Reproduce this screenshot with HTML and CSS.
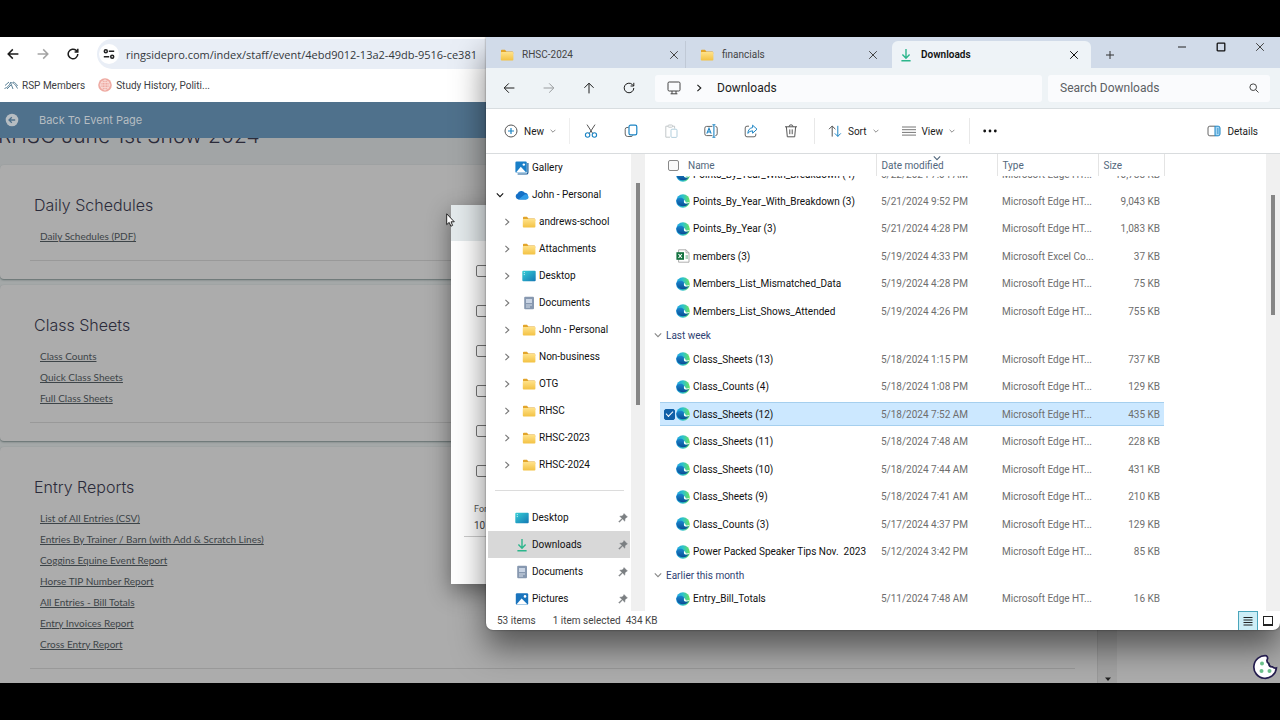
FILE: index.html
```html
<!DOCTYPE html>
<html lang="en">
<head>
    <meta charset="utf-8">
    <meta name="viewport" content="width=device-width, initial-scale=1">
    <title>Reports</title>
    <link rel="stylesheet" href="styles.css">
</head>
<body>
    <!-- ICONS -->
    <svg class="sprite" aria-hidden="true">
        <defs>
            <linearGradient id="gFolder" x1="0" y1="0" x2="0" y2="1"><stop offset="0" stop-color="#ffe28a"/><stop offset="1" stop-color="#f3c244"/></linearGradient>
            <linearGradient id="gDesk" x1="0" y1="0" x2="1" y2="1"><stop offset="0" stop-color="#35cfd6"/><stop offset="1" stop-color="#1478b4"/></linearGradient>
            <linearGradient id="gEdge" x1="0" y1="0" x2="1" y2="0"><stop offset="0" stop-color="#1b9de2"/><stop offset="0.5" stop-color="#2fc3c9"/><stop offset="1" stop-color="#6be35a"/></linearGradient>
            <linearGradient id="gEdge2" x1="0" y1="0" x2="0" y2="1"><stop offset="0" stop-color="#1a86cf"/><stop offset="1" stop-color="#0b4d93"/></linearGradient>
            <symbol id="folder" viewBox="0 0 14 12"><path d="M1 1.5Q1 .8 1.8.8H5l1.4 1.6H12.4q.8 0 .8.8V5H1z" fill="#e2a52b"/><rect x=".8" y="3" width="12.6" height="8.4" rx=".9" fill="url(#gFolder)"/></symbol>
            <symbol id="desktop" viewBox="0 0 14 12"><rect x=".3" y=".8" width="13.4" height="10.4" rx="1" fill="url(#gDesk)"/><path d="M1.8 2.6h1M1.8 4.6h1" stroke="#fff" stroke-width=".8"/></symbol>
            <symbol id="document" viewBox="0 0 14 14"><rect x="2.2" y=".8" width="9.8" height="12.4" rx="1" fill="#8798b0"/><rect x="4" y="3" width="6" height="4" fill="#c9d4e4"/><path d="M4 9h6M4 11h4" stroke="#dfe6f0" stroke-width=".9"/></symbol>
            <symbol id="picture" viewBox="0 0 14 14"><rect x=".8" y="1.2" width="12.4" height="11.6" rx="1.2" fill="#1a74bd"/><path d="M1.4 12.4 6.6 6.4l6 6z" fill="#fff"/><circle cx="10" cy="4.4" r="1.3" fill="#fff"/></symbol>
            <symbol id="gallery" viewBox="0 0 14 14"><path d="M12.9 2v9.4q0 1.6-1.6 1.6H2.6" fill="none" stroke="#155a96" stroke-width="1.2"/><rect x=".4" y=".6" width="11.4" height="11.2" rx="1.2" fill="#1a7fc8"/><path d="M1 11.4 5.8 5.8l5.4 5.6z" fill="#fff"/><circle cx="8.8" cy="3.6" r="1.2" fill="#fff"/></symbol>
            <symbol id="cloud" viewBox="0 0 14 10"><path d="M3.4 9.4A3 3 0 0 1 2.6 3.6 4 4 0 0 1 9.8 2.8a3.4 3.4 0 0 1 1 6.6z" fill="#1470c6"/><path d="M3.4 9.4 9.6 4.4a3.2 3.2 0 0 1 4 2.6q0 2.4-2.6 2.4z" fill="#2f9be8"/></symbol>
            <symbol id="download" viewBox="0 0 14 14"><path d="M7 1v9M3.4 6.6 7 10.2l3.6-3.6M2.4 12.8h9.2" fill="none" stroke="#2cb68c" stroke-width="1.4"/></symbol>
            <symbol id="edge" viewBox="0 0 14 14"><circle cx="7" cy="7" r="6.8" fill="url(#gEdge)"/><path d="M.3 6.4C1.2 3.8 4.4 3.2 6.6 4.2 8.2 5 8.4 6 8 7c-.8 1.6.6 2.6 2.4 2.6 1 0 1.8-.2 2.6-.8A6.8 6.8 0 0 1 .3 6.4z" fill="url(#gEdge2)"/><path d="M7.400 5.800q1.200.6.500 1.900-.3 1.700 1.900 1.900 1.600.1 3.200-.8l.2-.8Q11.400 8.800 9.800 8.300 9.200 6.200 7.400 5.800z" fill="#fff"/></symbol>
            <symbol id="excel" viewBox="0 0 14 14"><path d="M2.600.8h7.400l3 3v9.400H2.600z" fill="#fff" stroke="#9a9a9a" stroke-width=".8"/><path d="M10 .8v3h3" fill="none" stroke="#9a9a9a" stroke-width=".8"/><path d="M9.500 7h2.500M9.500 9h2.500" stroke="#58a77c"/><rect x=".4" y="3.200" width="7.600" height="7.600" fill="#12723f"/><path d="m2.500 5 3.400 4M5.900 5 2.500 9" stroke="#fff" stroke-width="1.100"/></symbol>
            <symbol id="pin" viewBox="0 0 10 10"><path d="m6 .6 3.400 3.400-1 .4L7 5.800 6.800 8.200 4.600 6 1.400 9.200 .8 8.600 4 5.400 1.800 3.200 4.200 3 5.600 1.600z" fill="#7b7f82" stroke="#7b7f82" stroke-width=".5"/></symbol>
            <symbol id="right" viewBox="0 0 8 8"><path d="m2.400.8 3.400 3.200-3.400 3.200" fill="none" stroke="currentColor" stroke-width="1.100"/></symbol>
            <symbol id="down" viewBox="0 0 8 8"><path d="m.8 2.400 3.200 3.200 3.200-3.200" fill="none" stroke="currentColor" stroke-width="1.100"/></symbol>
            <symbol id="close" viewBox="0 0 10 10"><path d="m1.200 1.200 7.600 7.600M8.800 1.200 1.200 8.800" stroke="currentColor"/></symbol>
            <symbol id="arrowLeft" viewBox="0 0 12 12"><path d="M11.400 6H1.200M5.800 1.400 1.200 6l4.600 4.600" fill="none" stroke="currentColor" stroke-width="var(--w, 1)"/></symbol>
            <symbol id="arrowRight" viewBox="0 0 12 12"><path d="M.6 6h10.200M6.200 1.400 10.800 6l-4.600 4.600" fill="none" stroke="currentColor" stroke-width="var(--w, 1)"/></symbol>
            <symbol id="arrowUp" viewBox="0 0 12 12"><path d="M6 11.400V1.200M1.400 5.800 6 1.200l4.600 4.600" fill="none" stroke="currentColor"/></symbol>
            <symbol id="reload" viewBox="0 0 12 12"><path d="M10.800 6a4.800 4.800 0 1 1-1.600-3.600L10.600 3.800M10.800.8v3.200H7.600" fill="none" stroke="currentColor" stroke-width="var(--w, 1)"/></symbol>
        </defs>
    </svg>

    <div class="stage">
        <!-- BROWSER -->
        <div class="browser">
            <div class="address-row">
                <button class="nav-btn" aria-label="Back"><svg class="i12"><use href="#arrowLeft"/></svg></button>
                <button class="nav-btn muted" aria-label="Forward"><svg class="i12"><use href="#arrowRight"/></svg></button>
                <button class="nav-btn" aria-label="Reload"><svg class="i12"><use href="#reload"/></svg></button>
                <div class="url-box">
                    <span class="site-info">
                        <svg class="i12" viewBox="0 0 12 12"><g fill="none" stroke="#222" stroke-width="1.500"><circle cx="2.800" cy="3.200" r="1.500"/><path d="M5.800 3.200h5.400M.8 8.800h5.400"/><circle cx="9.200" cy="8.800" r="1.500"/></g></svg>
                    </span>
                    <input class="url-input" aria-label="Address" value="ringsidepro.com/index/staff/event/4ebd9012-13a2-49db-9516-ce381">
                </div>
            </div>
            <div class="bookmarks">
                <a href="#" class="bookmark">
                    <svg class="i14" viewBox="0 0 14 14"><g fill="none" stroke="#5d8298"><path d="M.5 10.500C4 9.500 5.500 7 6.500 4.500c3 0 5 2 7 6M1 7.500l4-3.500M6.500 4.500 9 11M9 4c2 .5 3.500 2 4.500 4M3 11l4-4"/></g></svg>
                    RSP Members</a>
                <a href="#" class="bookmark">
                    <svg class="i14" viewBox="0 0 14 14"><circle cx="7" cy="7" r="6.800" fill="#eeaaa2"/><g fill="none" stroke="#f9dcd8" stroke-width=".8"><circle cx="7" cy="7" r="4.600"/><path d="M7 1v12M4 3v8M10 3v8M1.500 7h11M3 4.500h8M3 9.500h8"/></g></svg>
                    Study History, Politi...</a>
            </div>
            <div class="page">
                <div class="page-main">
                    <div class="page-bar">
                        <a href="#" class="back-link">
                            <svg class="i14" viewBox="0 0 14 14"><circle cx="7" cy="7" r="6.300" fill="#b6bdc2"/><path d="M10.200 7H4.200M6.800 4.200 4 7l2.800 2.800" fill="none" stroke="#4d708b" stroke-width="1.300"/></svg>
                            Back To Event Page</a>
                    </div>
                    <div class="hero"><h1 class="hero-title">RHSC June 1st Show 2024</h1></div>
                    <section class="card">
                        <h2 class="card-title">Daily Schedules</h2>
                        <ul class="links">
                            <li><a href="#">Daily Schedules (PDF)</a></li>
                        </ul>
                    </section>
                    <section class="card">
                        <h2 class="card-title">Class Sheets</h2>
                        <ul class="links">
                            <li><a href="#">Class Counts</a></li>
                            <li><a href="#">Quick Class Sheets</a></li>
                            <li><a href="#">Full Class Sheets</a></li>
                        </ul>
                    </section>
                    <section class="card">
                        <h2 class="card-title">Entry Reports</h2>
                        <ul class="links">
                            <li><a href="#">List of All Entries (CSV)</a></li>
                            <li><a href="#">Entries By Trainer / Barn (with Add &amp; Scratch Lines)</a></li>
                            <li><a href="#">Coggins Equine Event Report</a></li>
                            <li><a href="#">Horse TIP Number Report</a></li>
                            <li><a href="#">All Entries - Bill Totals</a></li>
                            <li><a href="#">Entry Invoices Report</a></li>
                            <li><a href="#">Cross Entry Report</a></li>
                        </ul>
                    </section>
                </div>
                <div class="page-scroll"><svg class="i8" viewBox="0 0 8 8"><path d="M1 2.500h6L4 6z" fill="#222"/></svg></div>
                <div class="page-side"></div>
            </div>
        </div>

        <!-- DIALOG BEHIND THE EXPLORER -->
        <form class="dialog">
            <div class="dialog-head"></div>
            <div class="dialog-body">
                <input type="checkbox" class="option" aria-label="Option 1">
                <input type="checkbox" class="option" aria-label="Option 2">
                <input type="checkbox" class="option" aria-label="Option 3">
                <input type="checkbox" class="option" aria-label="Option 4">
                <input type="checkbox" class="option" aria-label="Option 5">
                <input type="checkbox" class="option" aria-label="Option 6">
                <label class="size-label" for="size">For</label>
                <input id="size" class="size-input" value="10">
            </div>
        </form>

        <!-- FILE EXPLORER -->
        <div class="explorer">
            <div class="tabs">
                <div class="tab">
                    <svg class="i14"><use href="#folder"/></svg><span class="tab-name">RHSC-2024</span>
                    <button class="tab-close" aria-label="Close tab"><svg class="i10"><use href="#close"/></svg></button>
                </div>
                <div class="tab tab-line">
                    <svg class="i14"><use href="#folder"/></svg><span class="tab-name">financials</span>
                    <button class="tab-close" aria-label="Close tab"><svg class="i10"><use href="#close"/></svg></button>
                </div>
                <div class="tab active">
                    <svg class="i14"><use href="#download"/></svg><span class="tab-name">Downloads</span>
                    <button class="tab-close" aria-label="Close tab"><svg class="i10"><use href="#close"/></svg></button>
                </div>
                <button class="new-tab" aria-label="New tab"><svg class="i10" viewBox="0 0 10 10"><path d="M5 1v8M1 5h8" stroke="#333"/></svg></button>
                <div class="win-buttons">
                    <button aria-label="Minimize"><svg class="i10" viewBox="0 0 10 10"><path d="M1 5h8" stroke="#222"/></svg></button>
                    <button aria-label="Maximize"><svg class="i10" viewBox="0 0 10 10"><rect x="1.200" y="1.200" width="7.600" height="7.600" rx=".6" fill="none" stroke="#111" stroke-width="1.300"/></svg></button>
                    <button aria-label="Close"><svg class="i10"><use href="#close"/></svg></button>
                </div>
            </div>

            <div class="path-row">
                <button class="path-btn" aria-label="Back"><svg class="i12"><use href="#arrowLeft"/></svg></button>
                <button class="path-btn muted" aria-label="Forward"><svg class="i12"><use href="#arrowRight"/></svg></button>
                <button class="path-btn" aria-label="Up"><svg class="i12"><use href="#arrowUp"/></svg></button>
                <button class="path-btn" aria-label="Refresh"><svg class="i12"><use href="#reload"/></svg></button>
                <div class="path-box">
                    <svg class="i14" viewBox="0 0 14 14"><path d="M2.200 1h9.600q1.200 0 1.200 1.200v6.600q0 1.200-1.200 1.200H2.200Q1 10 1 8.800V2.200Q1 1 2.200 1zM5 10v2.800M9 10v2.800M3.600 12.800h6.800" fill="none" stroke="#444"/></svg>
                    <svg class="i8"><use href="#right"/></svg>
                    <span>Downloads</span>
                </div>
                <div class="search-box">
                    <input type="search" class="search-input" placeholder="Search Downloads" aria-label="Search Downloads">
                    <svg class="i10" viewBox="0 0 10 10"><circle cx="4.200" cy="4.200" r="3.300" fill="none" stroke="#444"/><path d="m6.600 6.600 2.900 2.900" stroke="#444"/></svg>
                </div>
            </div>

            <div class="toolbar">
                <button class="tool new"><svg class="i14" viewBox="0 0 14 14"><circle cx="7" cy="7" r="6" fill="none" stroke="#555"/><path d="M7 4v6M4 7h6" stroke="#1b84c4" stroke-width="1.200"/></svg>New<svg class="i6"><use href="#down"/></svg></button>
                <button class="tool icon-tool" aria-label="Cut"><svg class="i14" viewBox="0 0 14 14"><path d="M3 .6 8.800 9.600M11 .6 5.200 9.600" stroke="#555"/><g fill="none" stroke="#1b84c4" stroke-width="1.100"><circle cx="3.600" cy="11" r="2.200"/><circle cx="10.400" cy="11" r="2.200"/></g></svg></button>
                <button class="tool icon-tool" aria-label="Copy"><svg class="i14" viewBox="0 0 14 14"><path d="M4.500 3.500H3Q1.200 3.500 1.200 5.300V10Q1.200 12.500 3.700 12.500H7q1.400 0 1.800-1.200" fill="none" stroke="#666"/><rect x="5" y="1.200" width="7.800" height="9.600" rx="1.600" fill="none" stroke="#1b84c4" stroke-width="1.200"/></svg></button>
                <button class="tool icon-tool" aria-label="Paste" disabled><svg class="i14" viewBox="0 0 14 14"><path d="M4 2.200H1.800v11H6M8.600 2.200h2v2.400" fill="none" stroke="#c3c8ca"/><rect x="4" y="1" width="4.600" height="2.200" rx="1" fill="none" stroke="#c3c8ca"/><rect x="7" y="5.200" width="6" height="8.200" rx="1" fill="none" stroke="#b3cfdd"/></svg></button>
                <button class="tool icon-tool" aria-label="Rename"><svg class="i14" viewBox="0 0 14 14"><path d="M8.400 2.400H2.600Q.8 2.400.8 4.200v5.600q0 1.800 1.800 1.800h5.800M11.400 2.400q1.800 0 1.800 1.800v5.600q0 1.800-1.800 1.800" fill="none" stroke="#666"/><path d="M9.900 1v12M8.400.8h3M8.400 13.200h3M2.800 9.600 5 4.200l2.200 5.400M3.600 8h2.800" fill="none" stroke="#1b84c4" stroke-width="1.100"/></svg></button>
                <button class="tool icon-tool" aria-label="Share"><svg class="i14" viewBox="0 0 14 14"><path d="M5 2.200H3Q1.200 2.200 1.200 4v7q0 1.800 1.800 1.800h7q1.800 0 1.800-1.800V9.600" fill="none" stroke="#666"/><path d="M8.600 1.200 13 5.200l-4.400 4V6.800Q5.600 6.800 3.800 9.400 4.200 4.200 8.600 3.600z" fill="none" stroke="#1b84c4"/></svg></button>
                <button class="tool icon-tool" aria-label="Delete"><svg class="i14" viewBox="0 0 14 14"><path d="M1 2.800h12M2.400 2.800l.9 10h7.400l.9-10M5 2.800q0-2 2-2t2 2M5.800 5.400v4.800M8.200 5.400v4.800" fill="none" stroke="#555"/></svg></button>
                <button class="tool lined"><svg class="i14" viewBox="0 0 14 14"><path d="M4.200 12.600V2M1 5.200 4.200 2l3.200 3.200" fill="none" stroke="#555"/><path d="M9.800 1.800v10.600M6.800 9.400l3 3 3-3" fill="none" stroke="#1b84c4"/></svg>Sort<svg class="i6"><use href="#down"/></svg></button>
                <button class="tool view"><svg class="i14" viewBox="0 0 14 14"><path d="M0 3h14M0 5.700h14M0 8.400h14M0 11.100h14" stroke="#777"/></svg>View<svg class="i6"><use href="#down"/></svg></button>
                <button class="tool lined more" aria-label="More"><svg class="i14" viewBox="0 0 14 14"><g fill="#111"><circle cx="1.700" cy="7" r="1.400"/><circle cx="7" cy="7" r="1.400"/><circle cx="12.300" cy="7" r="1.400"/></g></svg></button>
                <button class="tool details"><svg class="i14" viewBox="0 0 14 14"><path d="M8 2.200H2.800Q1 2.200 1 4v6q0 1.800 1.800 1.800H8" fill="none" stroke="#666"/><path d="M8 2.200h3.200Q13 2.200 13 4v6q0 1.800-1.800 1.800H8z" fill="#a8d6f2" stroke="#1b84c4"/><path d="M10 5h1.500M10 7h1.500M10 9h1.500" stroke="#1b84c4"/></svg>Details</button>
            </div>

            <div class="explorer-body">
                <nav class="sidebar">
                    <a href="#" class="side-item"><span class="twist"></span><svg class="i14"><use href="#gallery"/></svg>Gallery</a>
                    <a href="#" class="side-item"><span class="twist open"><svg class="i8"><use href="#down"/></svg></span><svg class="i14"><use href="#cloud"/></svg>John - Personal</a>
                    <a href="#" class="side-item sub"><span class="twist"><svg class="i8"><use href="#right"/></svg></span><svg class="i14"><use href="#folder"/></svg>andrews-school</a>
                    <a href="#" class="side-item sub"><span class="twist"><svg class="i8"><use href="#right"/></svg></span><svg class="i14"><use href="#folder"/></svg>Attachments</a>
                    <a href="#" class="side-item sub"><span class="twist"><svg class="i8"><use href="#right"/></svg></span><svg class="i14"><use href="#desktop"/></svg>Desktop</a>
                    <a href="#" class="side-item sub"><span class="twist"><svg class="i8"><use href="#right"/></svg></span><svg class="i14"><use href="#document"/></svg>Documents</a>
                    <a href="#" class="side-item sub"><span class="twist"><svg class="i8"><use href="#right"/></svg></span><svg class="i14"><use href="#folder"/></svg>John - Personal</a>
                    <a href="#" class="side-item sub"><span class="twist"><svg class="i8"><use href="#right"/></svg></span><svg class="i14"><use href="#folder"/></svg>Non-business</a>
                    <a href="#" class="side-item sub"><span class="twist"><svg class="i8"><use href="#right"/></svg></span><svg class="i14"><use href="#folder"/></svg>OTG</a>
                    <a href="#" class="side-item sub"><span class="twist"><svg class="i8"><use href="#right"/></svg></span><svg class="i14"><use href="#folder"/></svg>RHSC</a>
                    <a href="#" class="side-item sub"><span class="twist"><svg class="i8"><use href="#right"/></svg></span><svg class="i14"><use href="#folder"/></svg>RHSC-2023</a>
                    <a href="#" class="side-item sub"><span class="twist"><svg class="i8"><use href="#right"/></svg></span><svg class="i14"><use href="#folder"/></svg>RHSC-2024</a>
                    <hr class="side-line">
                    <a href="#" class="side-item"><span class="twist"></span><svg class="i14"><use href="#desktop"/></svg>Desktop<svg class="i10 pin"><use href="#pin"/></svg></a>
                    <a href="#" class="side-item current"><span class="twist"></span><svg class="i14"><use href="#download"/></svg>Downloads<svg class="i10 pin"><use href="#pin"/></svg></a>
                    <a href="#" class="side-item"><span class="twist"></span><svg class="i14"><use href="#document"/></svg>Documents<svg class="i10 pin"><use href="#pin"/></svg></a>
                    <a href="#" class="side-item"><span class="twist"></span><svg class="i14"><use href="#picture"/></svg>Pictures<svg class="i10 pin"><use href="#pin"/></svg></a>
                </nav>
                <div class="gutter side-gutter"><div class="thumb"></div></div>

                <div class="files">
                    <table class="file-table">
                        <colgroup><col class="c-pad"><col class="c-name"><col class="c-date"><col class="c-type"><col class="c-size"><col></colgroup>
                        <thead>
                            <tr>
                                <th></th>
                                <th><div class="head-name"><input type="checkbox" class="tick" aria-label="Select all">Name</div></th>
                                <th class="sorted">Date modified<svg class="i8 sort-mark"><use href="#down"/></svg></th>
                                <th>Type</th>
                                <th>Size</th>
                                <th></th>
                            </tr>
                        </thead>
                        <tbody>
                            <tr class="cut">
                                <td></td>
                                <td><div class="clip"><div class="name"><svg class="i14"><use href="#edge"/></svg>Points_By_Year_With_Breakdown (4)</div></div></td>
                                <td><div class="clip"><span>5/22/2024 7:04 AM</span></div></td>
                                <td><div class="clip"><span>Microsoft Edge HT...</span></div></td>
                                <td><div class="clip end"><span>10,788 KB</span></div></td>
                                <td></td>
                            </tr>
                            <tr><td></td><td><div class="name"><svg class="i14"><use href="#edge"/></svg>Points_By_Year_With_Breakdown (3)</div></td><td>5/21/2024 9:52 PM</td><td>Microsoft Edge HT...</td><td>9,043 KB</td><td></td></tr>
                            <tr><td></td><td><div class="name"><svg class="i14"><use href="#edge"/></svg>Points_By_Year (3)</div></td><td>5/21/2024 4:28 PM</td><td>Microsoft Edge HT...</td><td>1,083 KB</td><td></td></tr>
                            <tr><td></td><td><div class="name"><svg class="i14"><use href="#excel"/></svg>members (3)</div></td><td>5/19/2024 4:33 PM</td><td>Microsoft Excel Co...</td><td>37 KB</td><td></td></tr>
                            <tr><td></td><td><div class="name"><svg class="i14"><use href="#edge"/></svg>Members_List_Mismatched_Data</div></td><td>5/19/2024 4:28 PM</td><td>Microsoft Edge HT...</td><td>75 KB</td><td></td></tr>
                            <tr><td></td><td><div class="name"><svg class="i14"><use href="#edge"/></svg>Members_List_Shows_Attended</div></td><td>5/19/2024 4:26 PM</td><td>Microsoft Edge HT...</td><td>755 KB</td><td></td></tr>
                            <tr class="group"><th colspan="6"><button class="group-btn"><svg class="i8"><use href="#down"/></svg>Last week</button></th></tr>
                            <tr><td></td><td><div class="name"><svg class="i14"><use href="#edge"/></svg>Class_Sheets (13)</div></td><td>5/18/2024 1:15 PM</td><td>Microsoft Edge HT...</td><td>737 KB</td><td></td></tr>
                            <tr><td></td><td><div class="name"><svg class="i14"><use href="#edge"/></svg>Class_Counts (4)</div></td><td>5/18/2024 1:08 PM</td><td>Microsoft Edge HT...</td><td>129 KB</td><td></td></tr>
                            <tr class="selected"><td></td><td><div class="name"><input type="checkbox" class="tick" aria-label="Class_Sheets (12)" checked><svg class="i14"><use href="#edge"/></svg>Class_Sheets (12)</div></td><td>5/18/2024 7:52 AM</td><td>Microsoft Edge HT...</td><td>435 KB</td><td></td></tr>
                            <tr><td></td><td><div class="name"><svg class="i14"><use href="#edge"/></svg>Class_Sheets (11)</div></td><td>5/18/2024 7:48 AM</td><td>Microsoft Edge HT...</td><td>228 KB</td><td></td></tr>
                            <tr><td></td><td><div class="name"><svg class="i14"><use href="#edge"/></svg>Class_Sheets (10)</div></td><td>5/18/2024 7:44 AM</td><td>Microsoft Edge HT...</td><td>431 KB</td><td></td></tr>
                            <tr><td></td><td><div class="name"><svg class="i14"><use href="#edge"/></svg>Class_Sheets (9)</div></td><td>5/18/2024 7:41 AM</td><td>Microsoft Edge HT...</td><td>210 KB</td><td></td></tr>
                            <tr><td></td><td><div class="name"><svg class="i14"><use href="#edge"/></svg>Class_Counts (3)</div></td><td>5/17/2024 4:37 PM</td><td>Microsoft Edge HT...</td><td>129 KB</td><td></td></tr>
                            <tr><td></td><td><div class="name"><svg class="i14"><use href="#edge"/></svg>Power Packed Speaker Tips Nov.&nbsp; 2023</div></td><td>5/12/2024 3:42 PM</td><td>Microsoft Edge HT...</td><td>85 KB</td><td></td></tr>
                            <tr class="group"><th colspan="6"><button class="group-btn"><svg class="i8"><use href="#down"/></svg>Earlier this month</button></th></tr>
                            <tr><td></td><td><div class="name"><svg class="i14"><use href="#edge"/></svg>Entry_Bill_Totals</div></td><td>5/11/2024 7:48 AM</td><td>Microsoft Edge HT...</td><td>16 KB</td><td></td></tr>
                        </tbody>
                    </table>
                </div>
                <div class="gutter file-gutter"><div class="thumb"></div></div>
            </div>

            <div class="status">
                <span>53 items</span>
                <span class="status-sel">1 item selected&nbsp; 434 KB</span>
                <div class="view-buttons">
                    <button class="on" aria-label="Details view"><svg class="i12" viewBox="0 0 12 12"><path d="M1.500 2.500h9M1.500 5h9M1.500 7.500h9M1.500 10h9" stroke="#222"/></svg></button>
                    <button aria-label="Large icons"><svg class="i12" viewBox="0 0 12 12"><rect x="1.500" y="1.500" width="9" height="8" fill="none" stroke="#222"/><path d="M1 10.500h10" stroke="#222"/></svg></button>
                </div>
            </div>
        </div>

        <button class="cookie" aria-label="Cookie settings">
            <svg class="i26" viewBox="0 0 26 26"><path d="M14.500 1.800A11.300 11.300 0 1 0 24.400 14q-2.400.8-4-1.200-3.400.2-3.600-3.200-3-1.800-1.200-5 .2-1.800-1.100-2.800z" fill="#fff" stroke="#241c4e" stroke-width="1.700"/><g fill="#6cc08b"><circle cx="10" cy="9.500" r="2"/><circle cx="9.500" cy="17" r="2"/><circle cx="17.500" cy="17" r="2"/></g></svg>
        </button>
        <svg class="cursor" viewBox="0 0 9 14"><path d="M.7.800v10.800l2.500-2.200 1.700 3.800 1.700-.8L5 8.800h3.300z" fill="#fff" stroke="#111" stroke-width=".9"/></svg>
    </div>
</body>
</html>
```
FILE: styles.css
```css
* {
    box-sizing: border-box;
}

body {
    margin: 0;
    height: 100vh;
    padding: 37px 0;
    background-color: #000;
    font-family: Roboto, "Open Sans", sans-serif;
    font-size: 10px;
    color: #1c1c1c;
}

button, input {
    font: inherit;
    color: inherit;
    margin: 0;
    padding: 0;
    border: none;
    background: none;
}

a {
    color: inherit;
    text-decoration: none;
}

svg {
    display: block;
    flex: none;
}

.sprite { position: absolute; width: 0; height: 0; }
.i6 { width: 6px; height: 6px; }
.i8 { width: 8px; height: 8px; }
.i10 { width: 10px; height: 10px; }
.i12 { width: 12px; height: 12px; }
.i14 { width: 14px; height: 14px; }
.i26 { width: 26px; height: 26px; }
.muted { opacity: 0.4; }

.stage {
    position: relative;
    height: 100%;
    overflow: hidden;
}

/* BROWSER */
.browser {
    height: 100%;
    display: flex;
    flex-direction: column;
    background-color: #fff;
}

.address-row {
    --w: 1.5;
    display: flex;
    align-items: center;
    gap: 18px;
    height: 34px;
    padding: 0 8px 0 7px;
    flex: none;
}

.url-box {
    display: flex;
    align-items: center;
    gap: 7px;
    flex: 1;
    height: 30px;
    padding-left: 2px;
    border-radius: 15px;
    background-color: #e9eef6;
}

.site-info {
    display: flex;
    align-items: center;
    justify-content: center;
    width: 20px;
    height: 20px;
    border-radius: 50%;
    background-color: #fff;
}

.url-input {
    flex: 1;
    font-family: "Open Sans", sans-serif;
    font-size: 11px;
    color: #33383c;
}

.bookmarks {
    display: flex;
    gap: 13px;
    height: 31px;
    padding-left: 4px;
    flex: none;
}

.bookmark {
    display: flex;
    align-items: center;
    gap: 4px;
    height: 28px;
    color: #3c4043;
}

.page {
    display: flex;
    flex: 1;
    min-height: 0;
    background-color: #acacac;
}

.page-main {
    flex: 1;
    min-width: 0;
    overflow: hidden;
    background-color: #a4a8a8;
}

.page-bar {
    height: 36px;
    background-color: #4f718c;
    color: #b6bdc2;
}

.back-link {
    display: flex;
    align-items: center;
    gap: 20px;
    height: 36px;
    padding-left: 5px;
    font-family: Inter, sans-serif;
    font-size: 11px;
}

.hero {
    display: flex;
    height: 27px;
    overflow: hidden;
    background-color: #a2a5a6;
}

.hero-title {
    margin: -14px 0 0 -2px;
    font-family: Inter, sans-serif;
    font-size: 21px;
    line-height: 24px;
    font-weight: 300;
    color: #2b2b3a;
}

.card {
    margin-bottom: 6px;
    padding: 28px 22px 18px 30px;
    border-radius: 4px;
    background-color: #acacac;
    box-shadow: 0 1px 2px #5f6c6c;
}

.card-title {
    margin: 0 0 9px 4px;
    font-family: Inter, sans-serif;
    font-size: 16px;
    line-height: 24px;
    font-weight: 300;
    color: #2b2b3a;
}

.links {
    margin: 0;
    padding: 0 0 13px 10px;
    border-bottom: 1px solid #999;
    list-style: none;
    font-family: Lato, sans-serif;
    font-size: 10px;
    line-height: 21px;
    color: #3d4448;
}

.links a {
    text-decoration: underline;
}

.page-scroll {
    display: flex;
    align-items: flex-end;
    justify-content: center;
    width: 20px;
    border-left: 1px solid #999;
    background-color: #a3a3a3;
}

.page-side {
    width: 163px;
}

/* DIALOG */
.dialog {
    position: absolute;
    left: 451px;
    top: 168px;
    width: 400px;
    background-color: #fff;
    box-shadow: 0 8px 22px rgba(0, 0, 0, 0.45);
}

.dialog-head {
    height: 36px;
    background-color: #e4eaec;
}

.dialog-body {
    display: flex;
    flex-direction: column;
    align-items: flex-start;
    padding: 24px 13px 47px 13px;
}

.option {
    appearance: none;
    width: 12px;
    height: 12px;
    margin: 0 0 28px 12px;
    border: 1px solid #777;
    border-radius: 2px;
}

.size-label {
    padding-left: 10px;
    font-size: 9px;
    line-height: 9px;
    color: #555;
}

.size-input {
    width: 100%;
    height: 23px;
    padding-left: 10px;
    border-bottom: 1px solid #ccc;
    color: #444;
}

/* FILE EXPLORER */
.explorer {
    position: absolute;
    top: 0;
    right: 0;
    bottom: 53px;
    left: 486px;
    display: flex;
    flex-direction: column;
    overflow: hidden;
    border-radius: 0 0 7px 7px;
    background-color: #fff;
    box-shadow: 0 18px 32px rgba(0, 0, 0, 0.5), 0 0 2px rgba(0, 0, 0, 0.5);
}

.tabs {
    display: flex;
    align-items: flex-end;
    height: 31px;
    flex: none;
    background-color: #d1dbe9;
    color: #444;
}

.tab {
    display: flex;
    align-items: center;
    gap: 8px;
    width: 199px;
    height: 27px;
    padding: 0 4px 0 14px;
}

.tab-line {
    border-left: 1px solid #c0c9d6;
}

.tab.active {
    margin-left: 8px;
    padding: 0 10px 0 7px;
    border-radius: 6px 6px 0 0;
    background-color: #eef3f7;
    color: #111;
    font-weight: 600;
}

.tab-name { flex: 1; }
.tab-close { padding: 2px; }
.new-tab { padding: 8px 14px; }

.win-buttons {
    display: flex;
    align-self: flex-start;
    justify-content: flex-end;
    gap: 29px;
    flex: 1;
    padding: 5px 15px 0 0;
}

.path-row {
    display: flex;
    align-items: center;
    gap: 28px;
    height: 41px;
    padding: 0 10px 0 17px;
    flex: none;
    background-color: #eef3f6;
    border-bottom: 1px solid #d8dde0;
}

.path-box, .search-box {
    display: flex;
    align-items: center;
    height: 27px;
    border-radius: 3px;
    background-color: #fafbfd;
    font-size: 12px;
}

.path-box {
    flex: 1;
    gap: 14px;
    margin-left: -8px;
    padding-left: 12px;
}

.search-box {
    width: 222px;
    margin-left: -22px;
    padding: 0 11px 0 12px;
}

.search-input {
    flex: 1;
    min-width: 0;
}

.search-input::placeholder {
    color: #5c6064;
    opacity: 1;
}

.toolbar {
    display: flex;
    align-items: center;
    height: 45px;
    padding: 0 22px 0 10px;
    flex: none;
    border-bottom: 1px solid #d9dcde;
}

.tool {
    display: flex;
    align-items: center;
    gap: 6px;
    height: 26px;
    padding: 0 8px;
}

.tool.new {
    margin-right: 1px;
    border-right: 1px solid #eee;
    padding-right: 13px;
}

.tool .i6 { color: #777; }
.icon-tool { padding: 0 13px; }

.tool.lined {
    margin-left: 3px;
    padding: 0 15px 0 13px;
    border-left: 1px solid #e8e8e8;
}

.tool.view { padding-right: 14px; }
.tool.more { margin-left: 0; }

.tool.details {
    margin-left: auto;
    padding: 0;
}

.explorer-body {
    display: flex;
    flex: 1;
    min-height: 0;
}

.sidebar {
    width: 145px;
    padding: 0 1px 0 2px;
    overflow: hidden;
    flex: none;
}

.side-item {
    display: flex;
    align-items: center;
    gap: 3px;
    height: 27px;
    padding: 0 2px 0 8px;
    color: #111;
    white-space: nowrap;
}

.side-item.sub { padding-left: 15px; }
.side-item.current { background-color: #d8d8d8; }

.twist {
    width: 16px;
    color: #777;
}

.twist.open { color: #111; }
.pin { margin-left: auto; }

.side-line {
    height: 1px;
    margin: 12px 6px 13px 7px;
    border: none;
    background-color: #dcdcdc;
}

.gutter {
    width: 14px;
    flex: none;
    background-color: #f0f0f0;
}

.thumb {
    width: 4px;
    background-color: #868686;
}

.side-gutter .thumb {
    height: 222px;
    margin: 29px 0 0 5px;
}

.file-gutter .thumb {
    height: 120px;
    margin: 41px 0 0 5px;
}

.files {
    flex: 1;
    min-width: 0;
    overflow: hidden;
}

.file-table {
    width: 100%;
    table-layout: fixed;
    border-collapse: collapse;
    white-space: nowrap;
}

.c-pad { width: 15px; }
.c-name { width: 216px; }
.c-date { width: 121px; }
.c-type { width: 101px; }
.c-size { width: 66px; }

.file-table td, .file-table th {
    padding: 0 5px;
    text-align: left;
    font-weight: 400;
}

.file-table td:first-child, .file-table td:nth-child(2), .file-table th:nth-child(2) {
    padding: 0;
}

.file-table thead th {
    height: 22px;
    color: #52677c;
}

.file-table thead th:nth-child(n+2):nth-child(-n+5) {
    border-right: 1px solid #e4e4e4;
}

.head-name {
    display: flex;
    align-items: center;
    gap: 9px;
    padding-left: 8px;
}

.sorted { position: relative; }

.sort-mark {
    position: absolute;
    top: 0;
    left: 50%;
    margin-left: -4px;
}

tbody tr { height: 28px; }
tbody tr:nth-child(odd) { height: 27px; }
tbody tr.group { height: 20px; }
tbody tr.cut { height: 11px; }

tbody td { color: #6e6e6e; }

.file-table td:nth-child(5) {
    padding-right: 4px;
    text-align: right;
}

/* first row is scrolled half under the header */
.clip {
    display: flex;
    align-items: flex-end;
    height: 11px;
    overflow: hidden;
    line-height: 24px;
}

.clip.end { justify-content: flex-end; }

.name {
    display: flex;
    align-items: center;
    gap: 3px;
    padding-left: 16px;
    color: #111;
}

.tick {
    appearance: none;
    display: grid;
    place-items: center;
    width: 11px;
    height: 11px;
    flex: none;
    border: 1px solid #888;
    border-radius: 2px;
    background-color: #fafafa;
}

.tick:checked {
    border-color: #0f5fa8;
    background-color: #0f5fa8;
}

.tick:checked::after {
    content: "";
    width: 6px;
    height: 3px;
    margin-bottom: 2px;
    border-left: 1px solid #fff;
    border-bottom: 1px solid #fff;
    transform: rotate(-45deg);
}

.selected td:nth-child(n+2):nth-child(-n+5) {
    background:
        linear-gradient(#cce8ff, #cce8ff) center / 100% 22px no-repeat,
        linear-gradient(#a5cfee, #a5cfee) center / 100% 24px no-repeat;
}

.selected .name {
    gap: 1px;
    padding-left: 4px;
}

.selected .name svg { margin-right: 2px; }

.group-btn {
    display: flex;
    align-items: center;
    gap: 4px;
    margin-left: 4px;
    color: #2f3f73;
}

.group-btn svg { color: #888; }

.status {
    display: flex;
    align-items: center;
    height: 19px;
    padding: 0 6px 0 11px;
    flex: none;
    color: #444;
}

.status-sel { margin-left: 17px; }

.view-buttons {
    display: flex;
    gap: 3px;
    margin-left: auto;
}

.view-buttons button {
    padding: 3px 0 3px 1px;
}

.view-buttons .on {
    padding: 3px;
    border: 1px solid #4aa5bb;
    background-color: #cdeef6;
}

/* ON TOP OF EVERYTHING */
.cookie {
    position: absolute;
    right: 2px;
    bottom: 3px;
}

.cursor {
    position: absolute;
    left: 446px;
    top: 176px;
    width: 9px;
    height: 14px;
}
```
